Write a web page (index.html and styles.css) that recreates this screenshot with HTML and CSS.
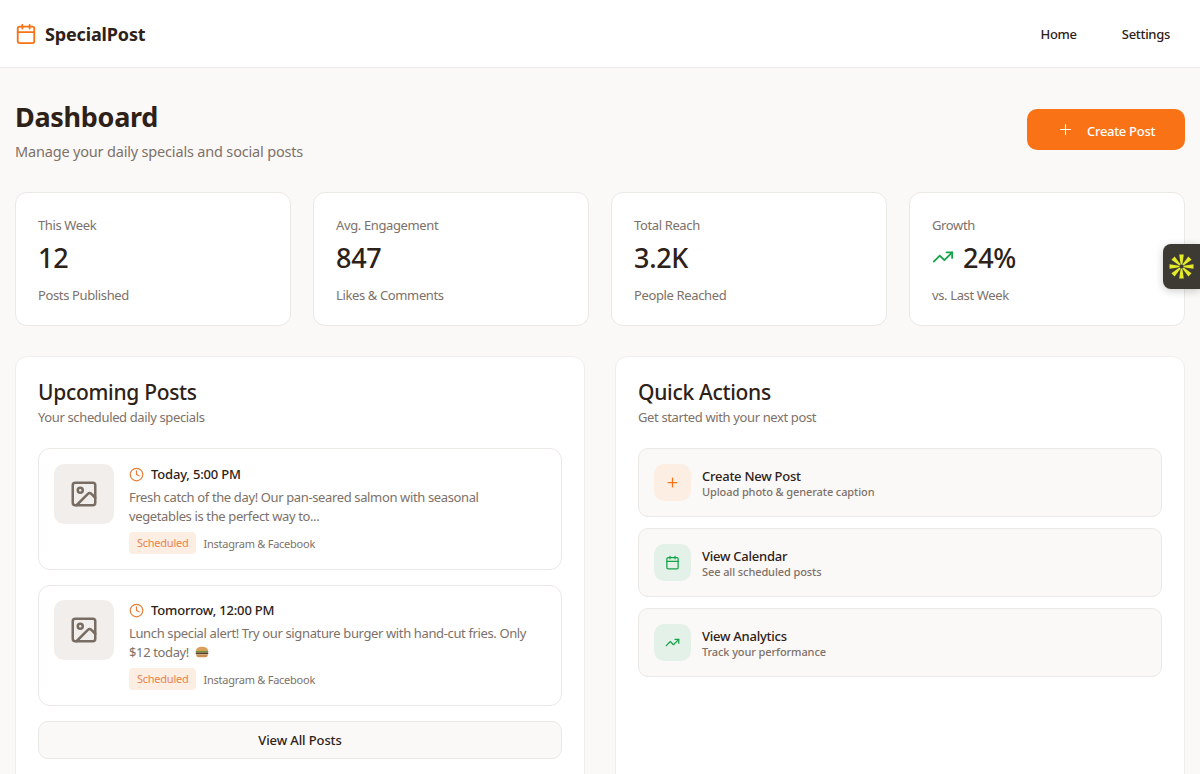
FILE: index.html
```html
<!doctype html>
<html lang="en">
<head>
    <meta charset="UTF-8">
    <title>SpecialPost</title>
    <link rel="stylesheet" href="styles.css">
</head>
<body>
<header class="topbar">
    <div class="brand">
        <svg class="brandIcon" viewBox="0 0 24 24"><path d="M8 2v4M16 2v4"/><rect x="3" y="4" width="18" height="18" rx="2"/><path d="M3 10h18"/></svg>
        <span>SpecialPost</span>
    </div>
    <nav class="nav">
        <a>Home</a>
        <a>Settings</a>
    </nav>
</header>

<main class="page">
    <div class="pageHead">
        <div>
            <h1>Dashboard</h1>
            <p>Manage your daily specials and social posts</p>
        </div>
        <button class="createBtn">
            <svg viewBox="0 0 24 24"><path d="M5 12h14M12 5v14"/></svg>
            <span>Create Post</span>
        </button>
    </div>

    <section class="stats">
        <div class="stat">
            <div class="statLabel">This Week</div>
            <div class="statValue">12</div>
            <div class="statNote">Posts Published</div>
        </div>
        <div class="stat">
            <div class="statLabel">Avg. Engagement</div>
            <div class="statValue">847</div>
            <div class="statNote">Likes &amp; Comments</div>
        </div>
        <div class="stat">
            <div class="statLabel">Total Reach</div>
            <div class="statValue">3.2K</div>
            <div class="statNote">People Reached</div>
        </div>
        <div class="stat">
            <div class="statLabel">Growth</div>
            <div class="statValue">
                <svg class="trend" viewBox="0 0 24 24"><path d="M22 7l-8.500 8.500-5-5L2 17"/><path d="M16 7h6v6"/></svg>
                <span>24%</span>
            </div>
            <div class="statNote">vs. Last Week</div>
        </div>
    </section>

    <section class="columns">
        <div class="panel">
            <h2>Upcoming Posts</h2>
            <p class="panelSub">Your scheduled daily specials</p>
            <div class="postList">
                <article class="post">
                    <div class="thumb">
                        <svg viewBox="0 0 24 24"><rect x="3" y="3" width="18" height="18" rx="2"/><circle cx="9" cy="9" r="2"/><path d="M21 15l-3.100-3.100a2 2 0 0 0-2.800 0L6 21"/></svg>
                    </div>
                    <div class="postBody">
                        <div class="postTime">
                            <svg viewBox="0 0 24 24"><circle cx="12" cy="12" r="10"/><path d="M12 6v6l4 2"/></svg>
                            <span>Today, 5:00 PM</span>
                        </div>
                        <p class="postText">Fresh catch of the day! Our pan-seared salmon with seasonal vegetables is the perfect way to...</p>
                        <div class="postMeta">
                            <span class="tag">Scheduled</span>
                            <span>Instagram &amp; Facebook</span>
                        </div>
                    </div>
                </article>
                <article class="post">
                    <div class="thumb">
                        <svg viewBox="0 0 24 24"><rect x="3" y="3" width="18" height="18" rx="2"/><circle cx="9" cy="9" r="2"/><path d="M21 15l-3.100-3.100a2 2 0 0 0-2.800 0L6 21"/></svg>
                    </div>
                    <div class="postBody">
                        <div class="postTime">
                            <svg viewBox="0 0 24 24"><circle cx="12" cy="12" r="10"/><path d="M12 6v6l4 2"/></svg>
                            <span>Tomorrow, 12:00 PM</span>
                        </div>
                        <p class="postText">Lunch special alert! Try our signature burger with hand-cut fries. Only $12 today!
                            <svg class="burger" viewBox="0 0 14 12"><path d="M1 5C1 2 4 .8 7 .8S13 2 13 5z" fill="#d9a05b"/><rect x=".6" y="5" width="12.800" height="1.400" rx=".7" fill="#6b8f3a"/><rect x=".6" y="6.400" width="12.800" height="1.800" rx=".9" fill="#5b3a26"/><path d="M1.200 8.400h11.600c0 1.800-1 2.800-2.400 2.800H3.600C2.200 11.200 1.200 10.200 1.200 8.400z" fill="#c98f4e"/></svg>
                        </p>
                        <div class="postMeta">
                            <span class="tag">Scheduled</span>
                            <span>Instagram &amp; Facebook</span>
                        </div>
                    </div>
                </article>
            </div>
            <button class="allBtn">View All Posts</button>
        </div>

        <div class="panel">
            <h2>Quick Actions</h2>
            <p class="panelSub">Get started with your next post</p>
            <div class="actionList">
                <a class="action">
                    <span class="actionIcon orange"><svg viewBox="0 0 24 24"><path d="M5 12h14M12 5v14"/></svg></span>
                    <span class="actionText"><b>Create New Post</b><small>Upload photo &amp; generate caption</small></span>
                </a>
                <a class="action">
                    <span class="actionIcon green"><svg viewBox="0 0 24 24"><path d="M8 2v4M16 2v4"/><rect x="3" y="4" width="18" height="18" rx="2"/><path d="M3 10h18"/></svg></span>
                    <span class="actionText"><b>View Calendar</b><small>See all scheduled posts</small></span>
                </a>
                <a class="action">
                    <span class="actionIcon green"><svg viewBox="0 0 24 24"><path d="M22 7l-8.500 8.500-5-5L2 17"/><path d="M16 7h6v6"/></svg></span>
                    <span class="actionText"><b>View Analytics</b><small>Track your performance</small></span>
                </a>
            </div>
        </div>
    </section>
</main>

<div class="sideWidget">
    <svg viewBox="0 0 24 24">
        <path id="spoke" d="M9.800 .5h4.400L12.800 10h-1.600z"/>
        <use href="#spoke" transform="rotate(45 12 12)"/>
        <use href="#spoke" transform="rotate(90 12 12)"/>
        <use href="#spoke" transform="rotate(135 12 12)"/>
        <use href="#spoke" transform="rotate(180 12 12)"/>
        <use href="#spoke" transform="rotate(225 12 12)"/>
        <use href="#spoke" transform="rotate(270 12 12)"/>
        <use href="#spoke" transform="rotate(315 12 12)"/>
    </svg>
</div>
</body>
</html>
```

FILE: styles.css
```css
* {
    padding: 0;
    margin: 0;
    box-sizing: border-box;
}

html, body {
    height: 100%;
    overflow: hidden;
}

body {
    position: relative;
    background-color: #fbf9f7;
    color: #2d2118;
    font-family: "Noto Sans", "Open Sans", sans-serif;
}

svg {
    fill: none;
    stroke: currentColor;
    stroke-width: 2;
    stroke-linecap: round;
    stroke-linejoin: round;
    flex-shrink: 0;
}

.topbar {
    display: flex;
    justify-content: space-between;
    align-items: center;
    height: 68px;
    padding: 0 30px 0 15px;
    background-color: #fff;
    border-bottom: 1px solid #ebe8e5;
}

.brand {
    display: flex;
    align-items: center;
    gap: 8px;
    font-size: 18px;
    font-weight: 700;
    letter-spacing: -.15px;
}

.brandIcon {
    width: 22px;
    height: 22px;
    color: #f97316;
}

.nav {
    display: flex;
    gap: 45px;
    font-size: 13px;
    font-weight: 500;
    letter-spacing: -.3px;
}

.page {
    padding: 31px 15px 0;
}

.pageHead {
    display: flex;
    justify-content: space-between;
    align-items: flex-start;
    margin-bottom: 31px;
}

h1 {
    font-size: 27px;
    line-height: 36px;
    font-weight: 700;
    letter-spacing: -.3px;
}

.pageHead p {
    margin-top: 6px;
    font-size: 14.500px;
    line-height: 20px;
    letter-spacing: -.18px;
    color: #7d7169;
}

.createBtn {
    display: flex;
    align-items: center;
    gap: 13px;
    width: 158px;
    height: 41px;
    margin-top: 10px;
    padding-left: 30px;
    border: 0;
    border-radius: 10px;
    background-color: #f97316;
    color: #fff;
    font-family: inherit;
    font-size: 13px;
    font-weight: 500;
    letter-spacing: -.3px;
}

.createBtn svg {
    width: 17px;
    height: 17px;
    stroke-width: 1.500;
}

.createBtn span {
    margin-top: 2px;
}

.stats {
    display: grid;
    grid-template-columns: repeat(4, 1fr);
    gap: 22px;
    margin-bottom: 30px;
}

.stat {
    height: 134px;
    padding: 22px;
    background-color: #fff;
    border: 1px solid #ebe8e5;
    border-radius: 12px;
}

.statLabel, .statNote {
    font-size: 13px;
    line-height: 20px;
    letter-spacing: -.37px;
    color: #7d7169;
}

.statValue {
    display: flex;
    align-items: center;
    gap: 9px;
    height: 34px;
    margin: 5px 0 11px;
    font-size: 27px;
    font-weight: 500;
    letter-spacing: -.3px;
}

.trend {
    width: 22px;
    height: 22px;
    color: #16a34a;
}

.columns {
    display: grid;
    grid-template-columns: 1fr 1fr;
    gap: 30px;
}

.panel {
    height: 500px;
    padding: 21px 22px;
    background-color: #fff;
    border: 1px solid #f0edea;
    border-radius: 12px;
}

h2 {
    font-size: 21px;
    line-height: 28px;
    font-weight: 500;
    letter-spacing: -.3px;
}

.panelSub {
    margin-top: 1px;
    font-size: 13px;
    line-height: 20px;
    letter-spacing: -.37px;
    color: #7d7169;
}

.postList {
    display: flex;
    flex-direction: column;
    gap: 15px;
    margin-top: 21px;
}

.post {
    display: flex;
    gap: 15px;
    height: 121.500px;
    padding: 15px;
    border: 1px solid #ebe8e5;
    border-radius: 12px;
}

.post:last-child {
    padding-top: 14.500px;
}

.thumb {
    display: flex;
    justify-content: center;
    align-items: center;
    flex-shrink: 0;
    width: 60px;
    height: 60px;
    border-radius: 10px;
    background-color: #f1eeeb;
    color: #786c63;
}

.thumb svg {
    width: 30px;
    height: 30px;
}

.postBody {
    padding-right: 5px;
}

.postTime {
    display: flex;
    align-items: center;
    gap: 7px;
    font-size: 13px;
    line-height: 20px;
    font-weight: 500;
    letter-spacing: -.17px;
}

.postTime svg {
    width: 15px;
    height: 15px;
    color: #e67e3a;
}

.postText {
    margin-top: 4px;
    font-size: 13px;
    line-height: 19px;
    letter-spacing: -.37px;
    color: #7d7169;
}

.burger {
    width: 14px;
    height: 12px;
    margin-left: 3px;
    stroke: none;
    vertical-align: -1px;
}

.postMeta {
    display: flex;
    align-items: center;
    gap: 7px;
    margin-top: 6px;
    font-size: 11px;
    letter-spacing: -.25px;
    color: #7d7169;
}

.tag {
    padding: 3px 8px;
    line-height: 16px;
    border-radius: 4px;
    background-color: #fdeee4;
    color: #e8834a;
}

.allBtn {
    display: block;
    width: 100%;
    height: 38px;
    margin-top: 15px;
    border: 1px solid #ebe8e5;
    border-radius: 10px;
    background-color: #fbf9f7;
    color: #2d2118;
    font-family: inherit;
    font-size: 13px;
    font-weight: 500;
    letter-spacing: -.12px;
}

.actionList {
    display: flex;
    flex-direction: column;
    gap: 11px;
    margin-top: 21px;
}

.action {
    display: flex;
    align-items: center;
    gap: 11px;
    height: 69px;
    padding: 0 15px;
    background-color: #fbf9f7;
    border: 1px solid #ebe8e5;
    border-radius: 10px;
}

.actionIcon {
    display: flex;
    justify-content: center;
    align-items: center;
    width: 37px;
    height: 37px;
    border-radius: 10px;
}

.actionIcon svg {
    width: 15px;
    height: 15px;
}

.orange {
    background-color: #fdeee4;
    color: #f97316;
}

.green {
    background-color: #e3f1e8;
    color: #16a34a;
}

.actionText {
    padding-top: 3px;
}

.actionText b {
    display: block;
    font-size: 13px;
    line-height: 16px;
    font-weight: 500;
    letter-spacing: -.25px;
}

.actionText small {
    display: block;
    font-size: 11px;
    line-height: 16px;
    font-weight: 500;
    letter-spacing: -.1px;
    color: #7d7169;
}

.sideWidget {
    position: absolute;
    top: 244px;
    right: 0;
    display: flex;
    align-items: center;
    padding-left: 6px;
    width: 37px;
    height: 45px;
    border-radius: 8px 0 0 8px;
    background-color: #3d3a34;
    box-shadow: 0 2px 8px rgba(0, 0, 0, .2);
    color: #e4ea2a;
}

.sideWidget svg {
    width: 25px;
    height: 25px;
    fill: currentColor;
    stroke: none;
}
```
